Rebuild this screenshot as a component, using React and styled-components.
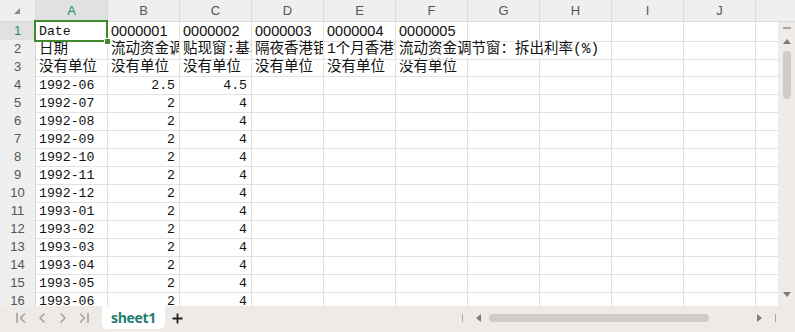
import styled, { createGlobalStyle } from "styled-components";

const GlobalStyle = createGlobalStyle`
  html, body { margin: 0; padding: 0; background: #ffffff; }
  body { font-family: "Liberation Sans", Arial, sans-serif; }
`;

// Layout
const Root = styled.div`
  width: 795px;
  height: 332px;
  display: flex;
  flex-direction: column;
  overflow: hidden;
  background: #ffffff;
`;

const Main = styled.div`
  display: flex;
  height: 306px;
`;

const Sheet = styled.div`
  flex: 1;
  overflow: hidden;
`;

const Row = styled.div`
  display: grid;
  grid-template-columns: 36px repeat(11, 72px);
  height: ${props => props.$head ? '22px' : '18px'};
`;

// Headers
const Corner = styled.div`
  box-sizing: border-box;
  background: #efefef;
  border-right: 1px solid #d9d9d9;
  border-bottom: 1px solid #d9d9d9;
  display: flex;
  align-items: flex-end;
  justify-content: flex-end;
  padding: 0 15px 7px 0;
`;

const ColHead = styled.div`
  box-sizing: border-box;
  background: ${props => props.$active ? '#e1e1e1' : '#efefef'};
  color: ${props => props.$active ? '#1f8a70' : '#555555'};
  border-right: 1px solid #dadada;
  border-bottom: 1px solid #d9d9d9;
  font-size: 13px;
  line-height: 21px;
  text-align: center;
`;

const RowHead = styled.div`
  box-sizing: border-box;
  background: ${props => props.$active ? '#e1e1e1' : '#efefef'};
  color: ${props => props.$active ? '#1f8a70' : '#555555'};
  border-right: 1px solid #d9d9d9;
  border-bottom: 1px solid #e2e2e2;
  font-size: 13px;
  line-height: 18px;
  text-align: center;
`;

// Cells
const Cell = styled.div`
  position: relative;
  box-sizing: border-box;
  border-right: 1px solid ${props => props.$noRight ? 'transparent' : '#e2e2e2'};
  border-bottom: 1px solid #e2e2e2;
  padding: 0 ${props => props.$align === 'right' ? '4px' : '2px'} 0 3px;
  text-align: ${props => props.$align || 'left'};
  white-space: nowrap;
  overflow: ${props => props.$spill || props.$selected ? 'visible' : 'hidden'};
  color: #111111;
  font-family: ${props => props.$sans
    ? '"Liberation Sans", Arial, sans-serif'
    : '"Liberation Mono", "Noto Sans CJK SC", monospace'};
  font-size: ${props => props.$cjk || props.$sans ? '14.5px' : '13.2px'};
  line-height: 19px;
  z-index: ${props => props.$selected ? 3 : props.$spill ? 1 : 0};
`;

const Selection = styled.div`
  position: absolute;
  left: -2px;
  top: -2px;
  right: -1px;
  bottom: -1px;
  border: 2px solid #3f8a2a;
  pointer-events: none;
`;

const Handle = styled.div`
  position: absolute;
  right: -5px;
  bottom: -5px;
  width: 5px;
  height: 5px;
  background: #3f8a2a;
  border: 1px solid #ffffff;
`;

// Vertical scrollbar
const VScroll = styled.div`
  width: 17px;
  display: flex;
  flex-direction: column;
`;

const VScrollHead = styled.div`
  height: 22px;
  flex: none;
  box-sizing: border-box;
  background: #efefef;
  border-bottom: 1px solid #d9d9d9;
`;

const VTrack = styled.div`
  flex: 1;
  background: #efebe8;
  display: flex;
  flex-direction: column;
  align-items: center;
  padding-top: 5px;
`;

const Dash = styled.div`
  width: 8px;
  height: 2px;
  background: #a9a6a3;
`;

const ArrowBox = styled.div`
  height: 12px;
  display: flex;
  align-items: center;
  justify-content: center;
`;

const VThumb = styled.div`
  width: 8px;
  height: 48px;
  border-radius: 4px;
  background: #cfcbc8;
  margin-top: 4px;
`;

const Spacer = styled.div`
  flex: 1;
`;

// Bottom bar
const BottomBar = styled.div`
  height: 26px;
  background: #eeeae7;
  display: flex;
  align-items: flex-start;
`;

const NavGroup = styled.div`
  display: flex;
  align-items: center;
  height: 24px;
  gap: 8px;
  padding-left: 14px;
  width: 88px;
`;

const NavBtn = styled.div`
  width: 13px;
  display: flex;
  justify-content: center;
`;

const Tab = styled.div`
  width: 63px;
  height: 23px;
  background: #ffffff;
  border-radius: 0 0 5px 5px;
  display: flex;
  align-items: center;
  justify-content: center;
  color: #1b7f6f;
  font-family: "Open Sans", "Liberation Sans", sans-serif;
  font-weight: 700;
  font-size: 14px;
  letter-spacing: -0.3px;
`;

const AddTab = styled.div`
  height: 24px;
  width: 24px;
  display: flex;
  align-items: center;
  justify-content: center;
`;

const HScroll = styled.div`
  margin-left: auto;
  width: 314px;
  height: 24px;
  display: flex;
  align-items: center;
  padding-right: 19px;
`;

const Tick = styled.div`
  width: 1px;
  height: 8px;
  background: #a9a6a3;
`;

const HArrow = styled(ArrowBox)`
  margin: ${props => props.$side === 'left' ? '0 8px 0 13px' : '0 13px 0 0'};
`;

const HThumb = styled.div`
  width: 220px;
  height: 8px;
  border-radius: 4px;
  background: #cfcbc8;
`;

const Tri = ({ dir }) => {
  const pts = {
    up: "0,5 4,0 8,5",
    down: "0,0 8,0 4,5",
    left: "5,0 5,8 0,4",
    right: "0,0 0,8 5,4",
  }[dir];
  const w = dir === 'up' || dir === 'down' ? 8 : 5;
  const h = dir === 'up' || dir === 'down' ? 5 : 8;
  return (
    <svg width={w} height={h} viewBox={`0 0 ${w} ${h}`}>
      <polygon points={pts} fill="#7d7a78" />
    </svg>
  );
};

const NavIcon = ({ kind }) => (
  <svg width="12" height="12" viewBox="0 0 12 12" fill="none" stroke="#a3a3a3" strokeWidth="1.6" strokeLinecap="round" strokeLinejoin="round">
    {kind === 'first' && <><path d="M2 1.5v9" /><path d="M9.5 2L5.5 6l4 4" /></>}
    {kind === 'prev' && <path d="M8 2L4 6l4 4" />}
    {kind === 'next' && <path d="M4 2l4 4-4 4" />}
    {kind === 'last' && <><path d="M2.5 2l4 4-4 4" /><path d="M10 1.5v9" /></>}
  </svg>
);

const colLetters = ['A', 'B', 'C', 'D', 'E', 'F', 'G', 'H', 'I', 'J', 'K'];

const dates = [
  '1992-06', '1992-07', '1992-08', '1992-09', '1992-10', '1992-11', '1992-12',
  '1993-01', '1993-02', '1993-03', '1993-04', '1993-05', '1993-06',
];

const headRow = [
  { text: 'Date' },
  { text: '0000001', sans: true },
  { text: '0000002', sans: true },
  { text: '0000003', sans: true },
  { text: '0000004', sans: true },
  { text: '0000005', sans: true },
];

const nameRow = [
  { text: '日期', cjk: true },
  { text: '流动资金调节窗：基本利率(%)', cjk: true },
  { text: '贴现窗:基本利率(%)', cjk: true },
  { text: '隔夜香港银行同业拆息(%)', cjk: true },
  { text: '1个月香港银行同业拆息(%)', cjk: true },
  { text: '流动资金调节窗：拆出利率(%)', cjk: true, spill: true, noRight: true },
  { text: '', noRight: true },
];

const unitRow = Array.from({ length: 6 }, () => ({ text: '没有单位', cjk: true }));

const rows = [
  headRow,
  nameRow,
  unitRow,
  ...dates.map((d, i) => [
    { text: d },
    { text: i === 0 ? '2.5' : '2', align: 'right' },
    { text: i === 0 ? '4.5' : '4', align: 'right' },
  ]),
];

const App = () => {
  return (
    <>
      <GlobalStyle />
      <Root>
        <Main>
          <Sheet>
            <Row $head>
              <Corner>
                <svg width="6" height="6" viewBox="0 0 6 6">
                  <polygon points="6,0 6,6 0,6" fill="#8a8a8a" />
                </svg>
              </Corner>
              {colLetters.map((c) => (
                <ColHead key={c} $active={c === 'A'}>{c}</ColHead>
              ))}
            </Row>
            {rows.map((cells, r) => (
              <Row key={r}>
                <RowHead $active={r === 0}>{r + 1}</RowHead>
                {colLetters.map((c, ci) => {
                  const cell = cells[ci] || {};
                  const selected = r === 0 && ci === 0;
                  return (
                    <Cell
                      key={c}
                      $align={cell.align}
                      $cjk={cell.cjk}
                      $sans={cell.sans}
                      $spill={cell.spill}
                      $noRight={cell.noRight}
                      $selected={selected}
                    >
                      {cell.text}
                      {selected && (
                        <Selection>
                          <Handle />
                        </Selection>
                      )}
                    </Cell>
                  );
                })}
              </Row>
            ))}
          </Sheet>
          <VScroll>
            <VScrollHead />
            <VTrack>
              <Dash />
              <ArrowBox style={{ marginTop: 6 }}><Tri dir="up" /></ArrowBox>
              <VThumb />
              <Spacer />
              <ArrowBox style={{ marginBottom: 6 }}><Tri dir="down" /></ArrowBox>
            </VTrack>
          </VScroll>
        </Main>
        <BottomBar>
          <NavGroup>
            <NavBtn><NavIcon kind="first" /></NavBtn>
            <NavBtn><NavIcon kind="prev" /></NavBtn>
            <NavBtn><NavIcon kind="next" /></NavBtn>
            <NavBtn><NavIcon kind="last" /></NavBtn>
          </NavGroup>
          <Tab>sheet1</Tab>
          <AddTab>
            <svg width="11" height="11" viewBox="0 0 11 11">
              <path d="M5.5 0.5v10M0.5 5.5h10" stroke="#222" strokeWidth="1.8" />
            </svg>
          </AddTab>
          <HScroll>
            <Tick />
            <HArrow $side="left"><Tri dir="left" /></HArrow>
            <HThumb />
            <Spacer />
            <HArrow $side="right"><Tri dir="right" /></HArrow>
            <Tick />
          </HScroll>
        </BottomBar>
      </Root>
    </>
  );
};

export default App;
